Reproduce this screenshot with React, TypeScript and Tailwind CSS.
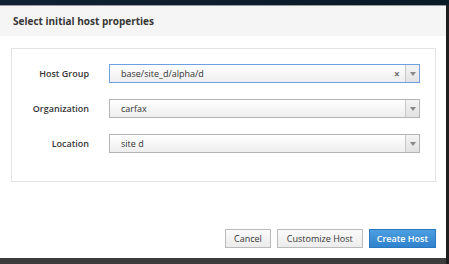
import React from "react";

const fields = [
  { label: "Host Group", value: "base/site_d/alpha/d", focused: true },
  { label: "Organization", value: "carfax", focused: false },
  { label: "Location", value: "site d", focused: false },
];

const Caret: React.FC = () => (
  <svg width="6" height="4" viewBox="0 0 6 4">
    <path d="M0 0 L6 0 L3 4 Z" fill="#888" />
  </svg>
);

const SelectBox: React.FC<{ value: string; focused: boolean }> = ({ value, focused }) => (
  <div
    className={`${
      focused ? "border-[#6f9fe0]" : "border-[#b4b4b4]"
    } flex flex-row items-center flex-1 h-[19px] border bg-gradient-to-b from-white to-[#eeeeee] text-[9px] text-[#333]`}
  >
    <span className="flex-1 pl-[11px] leading-[17px] whitespace-nowrap overflow-hidden">{value}</span>
    {focused ? (
      <span className="w-[8px] mr-[3px] text-[10px] leading-none text-[#666] font-bold">×</span>
    ) : (
      ""
    )}
    <span className="w-[14px] h-full flex items-center justify-center border-l border-[#c8c8c8] bg-gradient-to-b from-[#f4f4f4] to-[#e2e2e2]">
      <Caret />
    </span>
  </div>
);

const App: React.FC = () => {
  return (
    <div
      className="w-[449px] h-[264px] flex flex-col bg-[#3c3c3c] overflow-hidden"
      style={{ fontFamily: '"Open Sans", "Liberation Sans", sans-serif' }}
    >
      <div className="h-[5px] bg-gradient-to-r from-[#102234] to-[#0b1826]" />
      <div className="flex flex-row flex-1">
        <div className="w-[446px] h-[253px] flex flex-col bg-white border-t border-[#9a9a9a]">
          <div className="h-[30px] flex items-center px-[13px] bg-[#f5f5f5]">
            <h1 className="text-[10px] font-bold text-[#363636]">Select initial host properties</h1>
          </div>
          <div className="flex flex-col flex-1 pt-[12px] pl-[11px] pr-[10px] pb-[10px]">
            <div className="flex flex-col gap-[16px] border border-[#e3e3e3] pt-[15px] pb-[28px] pr-[15px]">
              {fields.map((f) => (
                <div key={f.label} className="flex flex-row items-center">
                  <label className="w-[77px] text-right text-[9px] font-semibold text-[#363636]">
                    {f.label}
                  </label>
                  <div className="w-[20px]" />
                  <SelectBox value={f.value} focused={f.focused} />
                </div>
              ))}
            </div>
            <div className="flex-1" />
            <div className="flex flex-row justify-end gap-[6px]">
              <button className="h-[19px] px-[8px] text-[9px] text-[#363636] border border-[#bbbbbb] bg-gradient-to-b from-[#fafafa] to-[#ececec]">
                Cancel
              </button>
              <button className="h-[19px] px-[9px] text-[9px] text-[#363636] border border-[#bbbbbb] bg-gradient-to-b from-[#fafafa] to-[#ececec]">
                Customize Host
              </button>
              <button className="h-[19px] px-[7px] text-[9px] font-semibold text-white border border-[#2a78c0] bg-gradient-to-b from-[#4c9fe0] to-[#2f82cc]">
                Create Host
              </button>
            </div>
          </div>
        </div>
        <div className="flex-1 bg-[#1e1e1e]" />
      </div>
    </div>
  );
};

export default App;
